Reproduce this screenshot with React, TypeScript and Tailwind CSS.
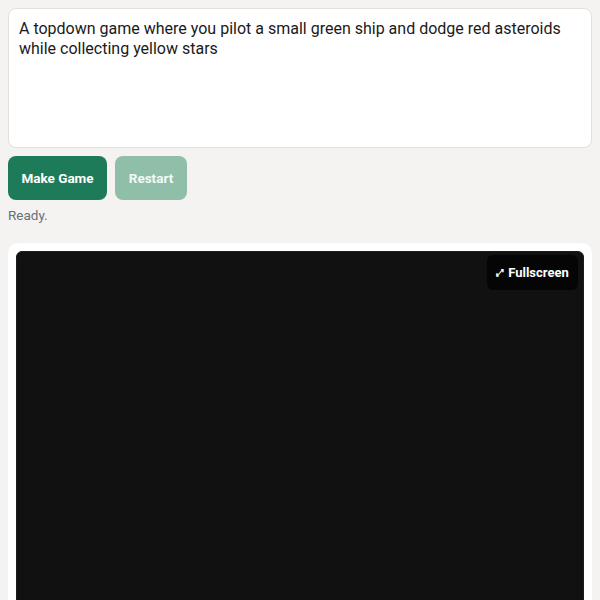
import React, { useState } from 'react';

export default function App() {
  const [prompt, setPrompt] = useState(
    'A topdown game where you pilot a small green ship and dodge red asteroids while collecting yellow stars'
  );

  return (
    <div
      className="min-h-[600px] bg-[#f4f3f1] p-2"
      style={{ fontFamily: 'Roboto, "Noto Sans", sans-serif' }}
    >
      <textarea
        value={prompt}
        onChange={(e) => setPrompt(e.target.value)}
        className="block w-full h-[140px] resize-none rounded-lg border border-[#e3e1dd] bg-white px-[10px] py-[10px] text-[16px] leading-[20px] text-[#1a1a1a] outline-none"
      />

      <div className="mt-2 flex gap-2">
        <button className="h-[44px] w-[99px] rounded-lg bg-[#1e7b5a] text-[13.5px] font-bold text-white">
          Make Game
        </button>
        <button
          disabled
          className="h-[44px] w-[72px] rounded-lg bg-[#8fbea9] text-[13.5px] font-bold text-white/90"
        >
          Restart
        </button>
      </div>

      <p className="mt-[7px] text-[13.5px] leading-[17px] text-[#6b6f76]">Ready.</p>

      <div className="mt-[19px] rounded-[10px] bg-white p-2">
        <div className="relative h-[400px] rounded-md border border-[#1c1c1c] bg-[#111111]">
          <button className="absolute right-[5px] top-[3px] flex h-[35px] w-[91px] items-center justify-center gap-[4px] rounded-md bg-[#050505] text-[13px] font-bold text-white">
            <span className="text-[10px] leading-none">⤢</span>
            Fullscreen
          </button>
        </div>
      </div>
    </div>
  );
}
